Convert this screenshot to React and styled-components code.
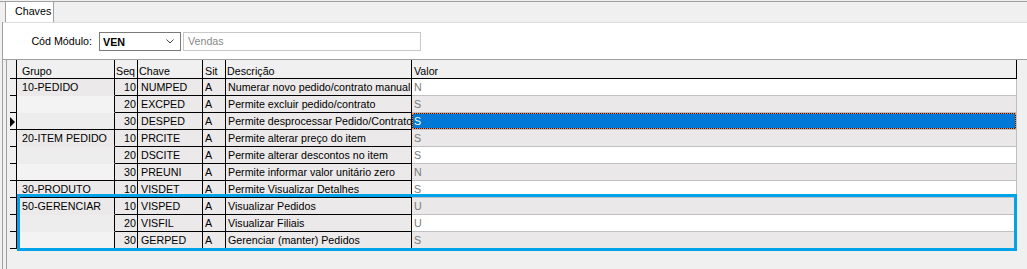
import React from 'react';
import styled, { createGlobalStyle } from 'styled-components';

const EstiloGlobal = createGlobalStyle`
  html, body {
    margin: 0;
    padding: 0;
    background: #f0f0f0;
  }
  body {
    font-family: "Liberation Sans", Arial, sans-serif;
    font-size: 10.7px;
    color: #000;
  }
`

// Estrutura geral

const Tela = styled.div`
  width: 1027px;
  height: 269px;
  padding-top: 1px;
  box-sizing: border-box;
  overflow: hidden;
  display: flex;
  flex-direction: column;
`

const BarraAbas = styled.div`
  display: flex;
  height: 21px;
  box-sizing: border-box;
  border-top: 1px solid #a0a0a0;
  padding-left: 5px;
`

const Aba = styled.div`
  width: 49px;
  box-sizing: border-box;
  border-left: 1px solid #a0a0a0;
  border-right: 1px solid #a0a0a0;
  background: #fff;
  padding-left: 9px;
  line-height: 19px;
`

const Pagina = styled.div`
  flex: 1;
  margin-left: 2px;
  border-left: 1px solid #a0a0a0;
  display: flex;
  flex-direction: column;
`

const Painel = styled.div`
  height: 38px;
  box-sizing: border-box;
  background: #fff;
  border-top: 1px solid #dcdcdc;
  border-bottom: 1px solid #a0a0a0;
  padding-top: 9px;
  display: flex;
  align-items: flex-start;
`

const Rotulo = styled.label`
  width: 89px;
  text-align: right;
  margin-right: 7px;
  line-height: 19px;
`

const Combo = styled.div`
  width: 82px;
  height: 19px;
  box-sizing: border-box;
  border: 1px solid #7a7a7a;
  background: #fff;
  display: flex;
  align-items: center;
  justify-content: space-between;
  padding: 0 6px 0 3px;
  font-weight: bold;
  margin-right: 2px;
`

const Campo = styled.div`
  width: 238px;
  height: 19px;
  box-sizing: border-box;
  border: 1px solid #c8c8c8;
  background: #fff;
  color: #8a8a8a;
  padding-left: 4px;
  line-height: 17px;
`

// Grade

const Grade = styled.div`
  position: relative;
  flex: 1;
  margin-left: 3px;
  border-left: 1px solid #a0a0a0;
  overflow: hidden;
`

const Linha = styled.div`
  display: flex;
  height: ${p => (p.$cabecalho ? 19 : 17)}px;
`

const Celula = styled.div`
  flex: none;
  box-sizing: border-box;
  width: ${p => p.$largura}px;
  height: 100%;
  padding: ${p => (p.$cabecalho ? 3 : 0)}px ${p => p.$padDir ?? 2}px 0 ${p => p.$padEsq ?? 2}px;
  border-right: 1px solid #000;
  border-bottom: 1px solid ${p => p.$linha || '#000'};
  background: ${p => p.$fundo || '#ebe9e9'};
  color: ${p => p.$cor || '#000'};
  line-height: 16px;
  white-space: nowrap;
  overflow: hidden;
  text-align: ${p => (p.$direita ? 'right' : 'left')};
`

const Indicador = styled.div`
  flex: none;
  box-sizing: border-box;
  width: 10px;
  height: 100%;
  border-right: 1px solid #000;
  background: linear-gradient(#000, #000) right bottom / 6px 1px no-repeat, #f0f0f0;
  display: flex;
  align-items: center;
  padding-left: 3px;
`

const Seta = styled.span`
  width: 0;
  height: 0;
  border-left: 5px solid #000;
  border-top: 5px solid transparent;
  border-bottom: 5px solid transparent;
`

const CelulaValor = styled.div`
  flex: none;
  box-sizing: border-box;
  width: 605px;
  height: 100%;
  border-right: 1px solid ${p => (p.$cabecalho ? '#000' : '#c0c0c0')};
  border-bottom: 1px solid ${p => (p.$cabecalho ? '#000' : '#c0c0c0')};
  background: ${p => (p.$cabecalho ? '#f0f0f0' : p.$par ? '#fff' : '#eae8e8')};
  color: ${p => (p.$cabecalho ? '#000' : '#7a7a7a')};
  padding: ${p => (p.$cabecalho ? 3 : 0)}px 0 0 ${p => (p.$selecionada ? 0 : 2)}px;
  line-height: 16px;
  white-space: nowrap;
`

const Selecao = styled.div`
  height: 16px;
  box-sizing: border-box;
  border: 1px dotted #ff8728;
  background: linear-gradient(#0078d7, #0078d7) padding-box, linear-gradient(#1a1a1a, #1a1a1a) border-box;
  color: #fff;
  padding-left: 1px;
  line-height: 14px;
`

const Destaque = styled.div`
  position: absolute;
  left: 10px;
  top: 134px;
  width: 1000px;
  height: 57px;
  box-sizing: border-box;
  border: 3px solid #00a2e8;
  pointer-events: none;
`

const colunas = { grupo: 98, seq: 23, chave: 65, sit: 23, desc: 186 }

const chaves = [
  { grupo: '10-PEDIDO', seq: 10, chave: 'NUMPED', desc: 'Numerar novo pedido/contrato manual', valor: 'N' },
  { grupo: '', seq: 20, chave: 'EXCPED', desc: 'Permite excluir pedido/contrato', valor: 'S' },
  { grupo: '', seq: 30, chave: 'DESPED', desc: 'Permite desprocessar Pedido/Contrato', valor: 'S', atual: true },
  { grupo: '20-ITEM PEDIDO', seq: 10, chave: 'PRCITE', desc: 'Permite alterar preço do item', valor: 'S' },
  { grupo: '', seq: 20, chave: 'DSCITE', desc: 'Permite alterar descontos no item', valor: 'S' },
  { grupo: '', seq: 30, chave: 'PREUNI', desc: 'Permite informar valor unitário zero', valor: 'N' },
  { grupo: '30-PRODUTO', seq: 10, chave: 'VISDET', desc: 'Permite Visualizar Detalhes', valor: 'S' },
  { grupo: '50-GERENCIAR', seq: 10, chave: 'VISPED', desc: 'Visualizar Pedidos', valor: 'U' },
  { grupo: '', seq: 20, chave: 'VISFIL', desc: 'Visualizar Filiais', valor: 'U' },
  { grupo: '', seq: 30, chave: 'GERPED', desc: 'Gerenciar (manter) Pedidos', valor: 'S' },
]

const Chevron = () => (
  <svg width="8" height="5" viewBox="0 0 8 5">
    <polyline points="0.5,0.5 4,4 7.5,0.5" fill="none" stroke="#444" strokeWidth="1" />
  </svg>
)

export default function App() {
  const linhas = chaves.map((item, i) => {
    const proxima = chaves[i + 1]
    const fimGrupo = !proxima || proxima.grupo !== ''
    const fundoGrupo = item.grupo ? '#ebe9e9' : i % 2 ? '#f3f3f3' : '#ededed'
    return (
      <Linha key={item.chave}>
        <Indicador>{item.atual && <Seta />}</Indicador>
        <Celula $largura={colunas.grupo} $padEsq={5} $fundo={fundoGrupo} $linha={fimGrupo ? '#000' : 'transparent'}>
          {item.grupo}
        </Celula>
        <Celula $largura={colunas.seq} $direita $padDir={1}>{item.seq}</Celula>
        <Celula $largura={colunas.chave} $padEsq={3}>{item.chave}</Celula>
        <Celula $largura={colunas.sit}>A</Celula>
        <Celula $largura={colunas.desc}>{item.desc}</Celula>
        <CelulaValor $par={i % 2 === 0} $selecionada={item.atual}>
          {item.atual ? <Selecao>{item.valor}</Selecao> : item.valor}
        </CelulaValor>
      </Linha>
    )
  })

  return (
    <Tela>
      <EstiloGlobal />
      <BarraAbas>
        <Aba>Chaves</Aba>
      </BarraAbas>
      <Pagina>
        <Painel>
          <Rotulo>Cód Módulo:</Rotulo>
          <Combo>
            <span>VEN</span>
            <Chevron />
          </Combo>
          <Campo>Vendas</Campo>
        </Painel>
        <Grade>
          <Linha $cabecalho>
            <Indicador />
            <Celula $cabecalho $largura={colunas.grupo} $padEsq={5} $fundo="#f0f0f0">Grupo</Celula>
            <Celula $cabecalho $largura={colunas.seq} $padEsq={1} $fundo="#f0f0f0">Seq</Celula>
            <Celula $cabecalho $largura={colunas.chave} $padEsq={1} $fundo="#f0f0f0">Chave</Celula>
            <Celula $cabecalho $largura={colunas.sit} $fundo="#f0f0f0">Sit</Celula>
            <Celula $cabecalho $largura={colunas.desc} $padEsq={1} $fundo="#f0f0f0">Descrição</Celula>
            <CelulaValor $cabecalho>Valor</CelulaValor>
          </Linha>
          {linhas}
          <Destaque />
        </Grade>
      </Pagina>
    </Tela>
  )
}
